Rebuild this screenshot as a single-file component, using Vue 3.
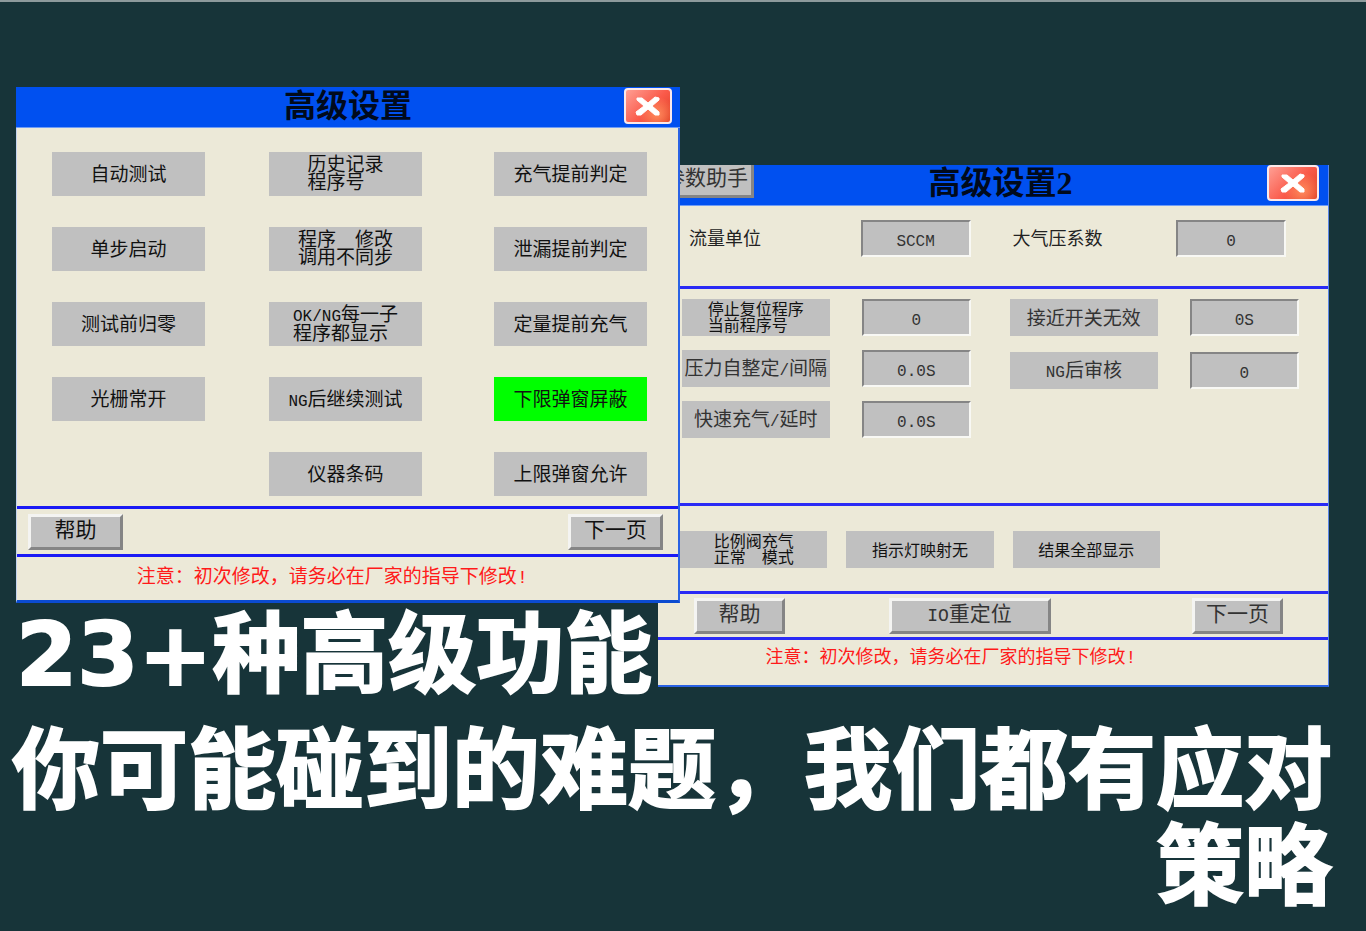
<script setup>
const switchColumns = [
  [
    { lines: ['自动测试'] },
    { lines: ['单步启动'] },
    { lines: ['测试前归零'] },
    { lines: ['光栅常开'] },
  ],
  [
    { lines: ['历史记录', '程序号'] },
    { lines: ['程序　修改', '调用不同步'] },
    { lines: ['OK/NG每一子', '程序都显示'] },
    { lines: ['NG后继续测试'] },
    { lines: ['仪器条码'] },
  ],
  [
    { lines: ['充气提前判定'] },
    { lines: ['泄漏提前判定'] },
    { lines: ['定量提前充气'] },
    { lines: ['下限弹窗屏蔽'], active: true },
    { lines: ['上限弹窗允许'] },
  ],
]

const leftParams = [
  { id: 'reset', lines: ['停止复位程序', '当前程序号'], value: '0' },
  { id: 'pressure', lines: ['压力自整定/间隔'], value: '0.0S' },
  { id: 'inflate', lines: ['快速充气/延时'], value: '0.0S' },
]

const rightParams = [
  { id: 'proximity', lines: ['接近开关无效'], value: '0S' },
  { id: 'review', lines: ['NG后审核'], value: '0' },
]

const modes = [['比例阀充气', '正常　模式'], ['指示灯映射无'], ['结果全部显示']]

const notice = '注意：初次修改，请务必在厂家的指导下修改!'

const parts = (line) =>
  line.split(/([A-Z/]+)/).filter(Boolean).map((text) => ({ text, latin: /^[A-Z/]+$/.test(text) }))
</script>

<template>
  <main class="poster">
    <div class="stage">
      <div class="left">
        <section class="window front" aria-label="高级设置">
          <header class="bar">
            <h2 class="title">高级设置</h2>
            <button class="close" type="button" aria-label="关闭">
              <svg viewBox="0 0 44 32" aria-hidden="true">
                <path d="M11 8 L16 8 L22 13 L29 7 L33 8 L33 10 L26 16 L33 22 L33 25 L29 25 L22 19 L15 25 L11 25 L10 22 L18 16 L11 10 Z" />
              </svg>
            </button>
          </header>
          <div class="switches">
            <div v-for="(column, c) in switchColumns" :key="c" class="switch-column">
              <button v-for="item in column" :key="item.lines[0]" type="button" class="cell"
                :class="{ active: item.active, single: item.lines.length === 1 }">
                <span class="lines">
                  <span v-for="line in item.lines" :key="line" class="line"><span v-for="(p, i) in parts(line)" :key="i"
                      :class="{ latin: p.latin }">{{ p.text }}</span></span>
                </span>
              </button>
            </div>
          </div>
          <footer class="actions">
            <button type="button" class="raised">帮助</button>
            <button type="button" class="raised">下一页</button>
          </footer>
          <p class="notice">{{ notice }}</p>
        </section>
        <h1 class="headline first">23+种高级功能</h1>
      </div>

      <section class="window back" aria-label="高级设置2">
        <header class="bar">
          <button type="button" class="raised helper">参数助手</button>
          <h2 class="title">高级设置2</h2>
          <button class="close" type="button" aria-label="关闭">
            <svg viewBox="0 0 44 32" aria-hidden="true">
              <path d="M11 8 L16 8 L22 13 L29 7 L33 8 L33 10 L26 16 L33 22 L33 25 L29 25 L22 19 L15 25 L11 25 L10 22 L18 16 L11 10 Z" />
            </svg>
          </button>
        </header>
        <div class="units">
          <label for="unit">流量单位</label>
          <input id="unit" class="value" type="text" value="SCCM" />
          <label for="factor">大气压系数</label>
          <input id="factor" class="value" type="text" value="0" />
        </div>
        <div class="params">
          <div v-for="(group, g) in [leftParams, rightParams]" :key="g" class="group">
            <div v-for="item in group" :key="item.id" class="param">
              <label class="cell" :class="item.lines.length > 1 ? 'small' : 'single'" :for="item.id">
                <span class="lines">
                  <span v-for="line in item.lines" :key="line" class="line"><span v-for="(p, i) in parts(line)" :key="i"
                      :class="{ latin: p.latin }">{{ p.text }}</span></span>
                </span>
              </label>
              <input :id="item.id" class="value" type="text" :value="item.value" />
            </div>
          </div>
        </div>
        <div class="modes">
          <button v-for="mode in modes" :key="mode[0]" type="button" class="cell small"
            :class="{ single: mode.length === 1 }">
            <span class="lines"><span v-for="line in mode" :key="line" class="line">{{ line }}</span></span>
          </button>
        </div>
        <footer class="actions">
          <button type="button" class="raised">帮助</button>
          <button type="button" class="raised wide"><span class="latin">IO</span>重定位</button>
          <button type="button" class="raised">下一页</button>
        </footer>
        <p class="notice">{{ notice }}</p>
      </section>
    </div>
    <p class="headline second">你可能碰到的难题，我们都有应对策略</p>
  </main>
</template>

<style>
body {
  margin: 0;
  background: #173439;
}
</style>

<style scoped>
.poster {
  box-sizing: border-box;
  min-height: 100vh;
  padding-top: 85px;
  border-top: 2px solid #8d9a9c;
  background: #173439;
  font-family: "Liberation Mono", "Noto Sans CJK SC", sans-serif;
  color: #111;
}

.poster * {
  box-sizing: border-box;
}

button,
input {
  margin: 0;
  padding: 0;
  border: 0;
  border-radius: 0;
  font: inherit;
  color: inherit;
}

.stage {
  display: grid;
  grid-template-columns: 664fr 649fr;
  align-items: start;
  margin: 0 37px 0 16px;
}

.window {
  background: #ece9d8;
}

.front {
  position: relative;
  z-index: 1;
  border-right: 2px solid #2a62e4;
  border-bottom: 3px solid #0b4bd0;
  border-left: 1px solid #c3d2ee;
}

.back {
  margin: 78px 0 0 -22px;
  border-right: 1px solid #5a86e8;
  border-bottom: 2px solid #2a62e4;
}

.bar {
  display: grid;
  grid-template-columns: 1fr auto 1fr;
  align-items: start;
  height: 41px;
  background: #0050f0;
  border-bottom: 1px solid #6f9cf5;
}

.front .bar {
  margin: 0 -2px 0 -1px;
}

.title {
  grid-column: 2;
  margin: 0;
  font: 700 32px/38px "Liberation Serif", "Noto Sans CJK SC", serif;
  color: #000a1c;
}

.close {
  grid-column: 3;
  justify-self: end;
  width: 48px;
  height: 36px;
  margin: 1px 8px 0 0;
  border: 2px solid #fbe9ea;
  border-radius: 4px;
  background: radial-gradient(circle at 70% 75%, #ff8a5c, transparent 45%), linear-gradient(135deg, #ff9f94, #fa5a4a 55%, #dd3e22);
}

.close svg {
  display: block;
  width: 100%;
  height: 100%;
}

.close path {
  fill: #fff;
  stroke: #fff;
  stroke-width: 1;
  stroke-linejoin: round;
}

.switches {
  display: grid;
  grid-template-columns: 153fr 64fr 153fr 72fr 153fr;
  padding: 24px 31px 10px 35px;
}

.switch-column {
  display: flex;
  flex-direction: column;
  gap: 31px;
}

.switch-column:nth-child(2) {
  grid-column: 3;
}

.switch-column:nth-child(3) {
  grid-column: 5;
}

.cell {
  display: flex;
  align-items: center;
  justify-content: center;
  height: 44px;
  padding-top: 2px;
  background: #c0c0c0;
  font-size: 19px;
  line-height: 18px;
  white-space: nowrap;
}

.cell.single {
  padding-top: 4px;
}

.cell.active {
  background: #00ff00;
}

.lines,
.line {
  display: block;
  text-align: left;
}

.latin {
  font-size: 16px;
}

.actions {
  display: flex;
  align-items: center;
  justify-content: space-between;
  border-top: 3px solid #1a1af5;
  border-bottom: 3px solid #1a1af5;
}

.front .actions {
  height: 51px;
  padding: 0 15px 0 11px;
}

.raised {
  width: 95px;
  height: 36px;
  border: 3px solid;
  border-color: #f4f4f2 #858585 #858585 #f4f4f2;
  background: #c0c0c0;
  font-size: 21px;
  line-height: 28px;
  white-space: nowrap;
}

.notice {
  margin: 0;
  text-align: center;
  font-size: 19px;
  line-height: 43px;
  color: #ff1a1a;
}

.front .notice {
  padding-right: 30px;
}

.back .helper {
  width: 96px;
  height: 33px;
  border-top: 0;
  color: #333;
}

.back .bar {
  grid-template-columns: 96px 1fr auto;
}

.back .title {
  padding-right: 20px;
  text-align: center;
  line-height: 36px;
}

.back .close {
  width: 52px;
  margin: 0 9px 0 0;
}

.value {
  width: 100%;
  min-width: 0;
  height: 37px;
  padding-top: 6px;
  border: 2px solid;
  border-color: #858585 #f8f8f4 #f8f8f4 #858585;
  background: #c0c0c0;
  font-size: 16px;
  text-align: center;
  color: #333;
}

.units {
  display: grid;
  grid-template-columns: 172fr 110fr 42fr 164fr 110fr;
  align-items: start;
  padding: 14px 42px 29px 31px;
  font-size: 18px;
  line-height: 40px;
  height: 80px;
  color: #222;
}

.units label:nth-of-type(2) {
  grid-column: 4;
}

.params {
  display: grid;
  grid-template-columns: 289fr 289fr;
  column-gap: 39px;
  align-items: start;
  min-height: 220px;
  padding: 10px 29px 10px 24px;
  border-top: 3px solid #2a2af5;
  border-bottom: 3px solid #2a2af5;
}

.group {
  display: grid;
  row-gap: 14px;
}

.group:nth-child(2) {
  row-gap: 16px;
}

.param {
  display: grid;
  grid-template-columns: 147fr 109fr;
  column-gap: 32px;
}

.back .cell {
  height: 37px;
  color: #333;
}

.back .cell.small {
  font-size: 16px;
  line-height: 16px;
  color: #111;
}

.modes {
  display: grid;
  grid-template-columns: repeat(3, 147fr);
  column-gap: 19px;
  padding: 25px 168px 23px 22px;
}

.back .actions {
  height: 49px;
  padding: 0 45px 0 36px;
  border-color: #2a2af5;
}

.back .actions .raised {
  width: 91px;
  color: #333;
}

.back .actions .wide {
  width: 162px;
  margin-right: 38px;
}

.wide .latin {
  font-size: 18px;
}

.back .notice {
  padding: 0 84px 9px 0;
  font-size: 18px;
  line-height: 36px;
}

.headline {
  margin: 0;
  font: 700 88px/96px "DejaVu Sans", "Noto Sans CJK SC", sans-serif;
  color: #fff;
  -webkit-text-stroke: 2px #fff;
}

.first {
  white-space: nowrap;
  line-height: 104px;
}

.second {
  padding: 16px 34px 0 8px;
  text-align: right;
}
</style>
